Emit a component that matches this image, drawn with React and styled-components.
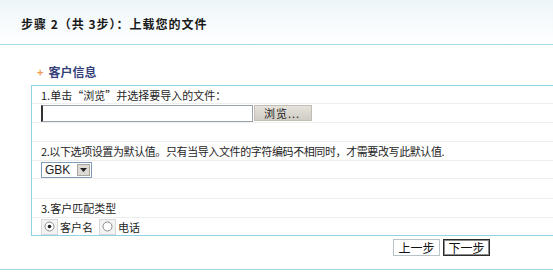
import React from 'react';
import styled, { createGlobalStyle } from 'styled-components';

const GlobalStyle = createGlobalStyle`
    body {
        margin: 0;
        background: #fff;
        font-family: "Noto Sans CJK SC", "Liberation Sans", sans-serif;
        font-size: 11px;
        color: #1e1e1e;
        overflow: hidden;
    }
`;

const Page = styled.div`
    width: 553px;
    height: 279px;
    overflow: hidden;
`;

const Header = styled.div`
    height: 45px;
    border-bottom: 1px solid #a9dae9;
    background: linear-gradient(180deg, #edf5f9 0%, #ffffff 100%);
    display: flex;
    align-items: center;
    padding: 3px 0 0 21px;
    box-sizing: border-box;
    font-weight: bold;
    font-size: 12px;
    letter-spacing: 1px;
    color: #1a1a1a;
`;

const Section = styled.div`
    padding-left: 31px;
    margin-right: -20px;
`;

const SectionTitle = styled.div`
    height: 40px;
    display: flex;
    align-items: center;
    padding: 13px 0 0 6px;
    box-sizing: border-box;
    font-weight: bold;
    font-size: 12px;
    color: #35427a;
    gap: 5px;
    .plus {
        color: #f29b55;
        font-size: 11px;
    }
`;

const Box = styled.div`
    border: 1px solid #8fd2e4;
    border-right: none;
`;

const Row = styled.div`
    height: ${p => p.$h || 18}px;
    display: flex;
    align-items: center;
    gap: 1px;
    padding-left: 9px;
    border-bottom: 1px solid #eeeeee;
    letter-spacing: ${p => (p.$tight ? '-0.4px' : 'normal')};
    &:last-child {
        border-bottom: none;
    }
`;

const FileInput = styled.div`
    width: 209px;
    height: 15px;
    border: 1px solid #9aa3ab;
    border-left: 2px solid #333;
    background: #fff;
`;

const BrowseButton = styled.div`
    width: 58px;
    height: 16px;
    background: linear-gradient(180deg, #e6e3dc 0%, #d0ccc3 100%);
    border: 1px solid #c2beb6;
    box-sizing: border-box;
    padding-left: 9px;
    line-height: 14px;
    letter-spacing: 1px;
    color: #222;
`;

const Select = styled.div`
    width: 51px;
    height: 16px;
    border: 1px solid #7f9db9;
    box-sizing: border-box;
    display: flex;
    align-items: center;
    justify-content: space-between;
    font-family: "Liberation Sans", sans-serif;
    font-size: 12px;
    padding-left: 3px;
    .arrow {
        width: 13px;
        height: 12px;
        margin-right: 1px;
        background: #dcdad4;
        border: 1px solid #aaa69e;
        box-sizing: border-box;
        display: flex;
        align-items: center;
        justify-content: center;
    }
`;

const RadioWrap = styled.label`
    display: flex;
    align-items: center;
    gap: 2px;
    margin-right: 5px;
    .dot {
        width: 17px;
        height: 16px;
        background: #f3f3f3;
        border: 1px solid #d8d8d8;
        box-sizing: border-box;
        display: flex;
        align-items: center;
        justify-content: center;
    }
`;

const Footer = styled.div`
    height: 34px;
    border-bottom: 1px solid #a9dae9;
    display: flex;
    align-items: flex-start;
    padding: 3px 0 0 393px;
    gap: 3px;
    box-sizing: border-box;
`;

const NavButton = styled.div`
    width: 47px;
    height: 17px;
    box-sizing: border-box;
    border: 1px solid ${p => (p.$primary ? '#2b2b2b' : '#b9c4c9')};
    ${p => p.$primary && 'box-shadow: inset 0 0 0 1px #8a8a8a;'}
    background: #fff;
    display: flex;
    align-items: center;
    justify-content: center;
    font-size: 12px;
    color: #111;
`;

const Radio = ({ checked, label }) => (
    <RadioWrap>
        <span className='dot'>
            <svg width="11" height="11" viewBox="0 0 11 11">
                <circle cx="5.5" cy="5.5" r="4.5" fill="#fff" stroke="#8a8a8a" />
                {checked && <circle cx="5.5" cy="5.5" r="1.8" fill="#222" />}
            </svg>
        </span>
        {label}
    </RadioWrap>
);

const App = () => {
    return (
        <Page>
            <GlobalStyle />
            <Header>步骤 2（共 3步）：上载您的文件</Header>
            <Section>
                <SectionTitle><span className='plus'>+</span>客户信息</SectionTitle>
                <Box>
                    <Row $h={17}>1.单击“浏览”并选择要导入的文件：</Row>
                    <Row>
                        <FileInput />
                        <BrowseButton>浏览...</BrowseButton>
                    </Row>
                    <Row />
                    <Row $tight>2.以下选项设置为默认值。只有当导入文件的字符编码不相同时，才需要改写此默认值.</Row>
                    <Row $h={17}>
                        <Select>
                            GBK
                            <span className='arrow'>
                                <svg width="7" height="4" viewBox="0 0 7 4"><path d="M0 0h7L3.5 4z" fill="#222" /></svg>
                            </span>
                        </Select>
                    </Row>
                    <Row $h={19} />
                    <Row>3.客户匹配类型</Row>
                    <Row $h={17}>
                        <Radio checked label="客户名" />
                        <Radio label="电话" />
                    </Row>
                </Box>
            </Section>
            <Footer>
                <NavButton>上一步</NavButton>
                <NavButton $primary>下一步</NavButton>
            </Footer>
        </Page>
    );
};

export default App;
